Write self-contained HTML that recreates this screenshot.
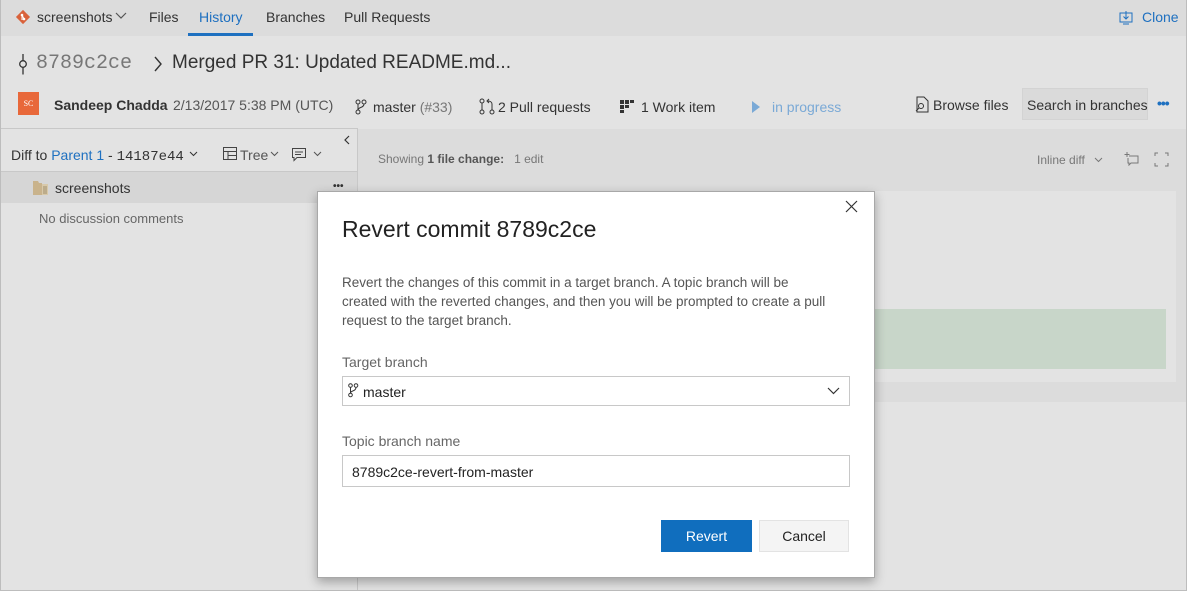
<!DOCTYPE html>
<html><head><meta charset="utf-8"><style>
*{box-sizing:border-box;margin:0;padding:0}
body{width:1187px;height:591px;overflow:hidden;background:#e3e3e3;font-family:"Liberation Sans",sans-serif;font-size:13px;color:#333;position:relative}
.a{position:absolute;white-space:nowrap}
</style></head><body>
<div class="a" style="left:0;top:0;width:1187px;height:591px;border:1px solid #bdbdbd;border-top:none"></div>
<div class="a" style="left:1px;top:0;width:1185px;height:36px;background:#dcdcdc"></div>
<svg class="a" style="left:15px;top:9px" width="16" height="16" viewBox="0 0 16 16"><rect x="3" y="3" width="10" height="10" transform="rotate(45 8 8)" fill="#d9623b"/><circle cx="7" cy="6" r="1.3" fill="#fff"/><circle cx="9" cy="10" r="1.3" fill="#fff"/><path d="M7 6L9 10M7 6v5" stroke="#fff" stroke-width="1"/></svg>
<div class="a" style="left:37px;top:9px;font-size:14px;color:#333">screenshots</div>
<svg class="a" style="left:115px;top:12px" width="12" height="8"><path d="M1 1l5 5 5-5" stroke="#555" fill="none" stroke-width="1.2"/></svg>
<div class="a" style="left:149px;top:9px;font-size:14px">Files</div>
<div class="a" style="left:199px;top:9px;font-size:14px;color:#1e70c0">History</div>
<div class="a" style="left:188px;top:33px;width:65px;height:3px;background:#1e70c0"></div>
<div class="a" style="left:266px;top:9px;font-size:14px">Branches</div>
<div class="a" style="left:344px;top:9px;font-size:14px">Pull Requests</div>
<svg class="a" style="left:1119px;top:10px" width="15" height="15"><rect x="1" y="3" width="12" height="9" fill="none" stroke="#1e70c0"/><path d="M7 1v8M4.5 6.5L7 9l2.5-2.5M4 14h6" stroke="#1e70c0" fill="none"/></svg>
<div class="a" style="left:1142px;top:9px;font-size:14px;color:#1e70c0">Clone</div>
<div class="a" style="left:1px;top:36px;width:1185px;height:92px;background:#e3e3e3"></div>
<svg class="a" style="left:18px;top:53px" width="10" height="22"><circle cx="5" cy="11" r="3.3" fill="none" stroke="#333" stroke-width="1.3"/><path d="M5 1v6.5M5 14.5v7" stroke="#333" stroke-width="1.3"/></svg>
<div class="a" style="left:36px;top:52px;font-family:'Liberation Mono',monospace;font-size:20px;color:#777">8789c2ce</div>
<svg class="a" style="left:153px;top:56px" width="10" height="16"><path d="M2 1l6 7-6 7" stroke="#333" fill="none" stroke-width="1.4"/></svg>
<div class="a" style="left:172px;top:52px;font-size:19px;color:#333">Merged PR 31: Updated README.md...</div>
<div class="a" style="left:18px;top:92px;width:21px;height:23px;background:#e8683a;color:#fff;font-size:8px;font-family:'Liberation Serif',serif;text-align:center;line-height:23px">SC</div>
<div class="a" style="left:54px;top:97px;font-size:14px;font-weight:bold;color:#333">Sandeep Chadda</div>
<div class="a" style="left:173px;top:97px;font-size:14px;color:#555">2/13/2017 5:38 PM (UTC)</div>
<svg class="a" style="left:355px;top:99px" width="12" height="16"><circle cx="3" cy="3" r="2" fill="none" stroke="#333"/><circle cx="9" cy="3" r="2" fill="none" stroke="#333"/><circle cx="3" cy="13" r="2" fill="none" stroke="#333"/><path d="M3 5v6M9 5c0 4-6 3-6 6" stroke="#333" fill="none"/></svg>
<div class="a" style="left:373px;top:99px;font-size:14px;color:#333">master <span style="color:#777">(#33)</span></div>
<svg class="a" style="left:479px;top:98px" width="16" height="17"><circle cx="3" cy="3" r="2" fill="none" stroke="#333"/><circle cx="3" cy="14" r="2" fill="none" stroke="#333"/><circle cx="13" cy="14" r="2" fill="none" stroke="#333"/><path d="M3 5v7M13 12V6c0-2-2-3-4-3M10 1L8 3l2 2" stroke="#333" fill="none"/></svg>
<div class="a" style="left:498px;top:99px;font-size:14px">2 Pull requests</div>
<svg class="a" style="left:620px;top:100px" width="16" height="13"><rect x="0" y="0" width="4" height="4" fill="#333"/><rect x="5" y="0" width="4" height="4" fill="#333"/><rect x="10" y="0" width="4" height="3" fill="#333"/><rect x="0" y="5" width="4" height="4" fill="#333"/><rect x="5" y="5" width="4" height="3" fill="#333"/><rect x="0" y="10" width="4" height="3" fill="#333"/></svg>
<div class="a" style="left:641px;top:99px;font-size:14px">1 Work item</div>
<svg class="a" style="left:751px;top:100px" width="10" height="14"><path d="M1 1l8 6-8 6z" fill="#7aa9d6"/></svg>
<div class="a" style="left:772px;top:99px;font-size:14px;color:#7aa9d6">in progress</div>
<svg class="a" style="left:914px;top:96px" width="16" height="17"><path d="M3 1h7l4 4v11H3z" fill="none" stroke="#333"/><circle cx="7" cy="10" r="2.5" fill="none" stroke="#333"/><path d="M5 12l-3 3" stroke="#333"/></svg>
<div class="a" style="left:933px;top:97px;font-size:14px">Browse files</div>
<div class="a" style="left:1022px;top:88px;width:126px;height:32px;background:#dadada;border:1px solid #d3d3d3"></div>
<div class="a" style="left:1027px;top:97px;font-size:14px">Search in branches</div>
<div class="a" style="left:1157px;top:95px;font-size:14px;color:#1e70c0;font-weight:bold;letter-spacing:-1px">•••</div>
<div class="a" style="left:1px;top:128px;width:357px;height:462px;background:#e3e3e3;border-right:1px solid #c8c8c8;border-top:1px solid #c8c8c8"></div>
<svg class="a" style="left:343px;top:135px" width="8" height="10"><path d="M6 1L2 5l4 4" stroke="#333" fill="none" stroke-width="1.2"/></svg>
<div class="a" style="left:11px;top:147px;font-size:14px">Diff to <span style="color:#1e70c0">Parent 1</span> - <span style="font-family:'Liberation Mono',monospace">14187e44</span></div>
<svg class="a" style="left:189px;top:151px" width="9" height="6"><path d="M1 1l3.5 3.5L8 1" stroke="#333" fill="none"/></svg>
<svg class="a" style="left:223px;top:147px" width="15" height="14"><rect x=".5" y=".5" width="13" height="12" fill="none" stroke="#444"/><path d="M.5 4.5h13M5 4.5v8M5 8.5h8.5" stroke="#444"/></svg>
<div class="a" style="left:240px;top:147px;font-size:14px;color:#555">Tree</div>
<svg class="a" style="left:270px;top:151px" width="9" height="6"><path d="M1 1l3.5 3.5L8 1" stroke="#555" fill="none"/></svg>
<svg class="a" style="left:292px;top:148px" width="15" height="14"><path d="M.5.5h13v9H5l-3 3v-3H.5z" fill="none" stroke="#444"/><path d="M3 4h8M3 6.5h6" stroke="#444"/></svg>
<svg class="a" style="left:313px;top:151px" width="9" height="6"><path d="M1 1l3.5 3.5L8 1" stroke="#555" fill="none"/></svg>
<div class="a" style="left:1px;top:171px;width:356px;height:1px;background:#c8c8c8"></div>
<div class="a" style="left:1px;top:172px;width:356px;height:31px;background:#d6d6d6"></div>
<svg class="a" style="left:33px;top:181px" width="16" height="14"><path d="M0 0h5l1 2h3v12H0z" fill="#c9b38c"/><path d="M9 3h6v11H9z" fill="#d8c9aa"/><path d="M10 6h4M10 8h4M10 10h4M10 12h4" stroke="#a08e6c"/></svg>
<div class="a" style="left:55px;top:180px;font-size:14px">screenshots</div>
<div class="a" style="left:333px;top:181px;font-size:10px;font-weight:bold;color:#333">•••</div>
<div class="a" style="left:39px;top:211px;font-size:13px;color:#666">No discussion comments</div>
<div class="a" style="left:358px;top:129px;width:828px;height:273px;background:#dcdcdc"></div>
<div class="a" style="left:378px;top:152px;font-size:12px;color:#777">Showing <span style="color:#555;font-weight:bold">1 file change:</span>&nbsp;&nbsp; 1 edit</div>
<div class="a" style="left:1037px;top:153px;font-size:12px;color:#777">Inline diff</div>
<svg class="a" style="left:1094px;top:157px" width="9" height="6"><path d="M1 1l3.5 3.5L8 1" stroke="#777" fill="none"/></svg>
<svg class="a" style="left:1123px;top:151px" width="16" height="15"><path d="M4 1v5M1.5 3.5h5M6 5h9v7H8l-2 2v-2H5V7" fill="none" stroke="#777"/></svg>
<svg class="a" style="left:1154px;top:152px" width="15" height="15"><path d="M1 4V1h3M11 1h3v3M14 11v3h-3M4 14H1v-3" fill="none" stroke="#777"/></svg>
<div class="a" style="left:363px;top:191px;width:813px;height:191px;background:#e3e3e3"></div>
<div class="a" style="left:870px;top:309px;width:296px;height:60px;background:#c8d6c9"></div>
<div class="a" style="left:317px;top:191px;width:558px;height:387px;background:#fff;border:1px solid #a8a8a8;box-shadow:0 4px 10px rgba(0,0,0,.3)"></div>
<svg class="a" style="left:845px;top:200px" width="13" height="13"><path d="M1 1l11 11M12 1L1 12" stroke="#333" stroke-width="1.2"/></svg>
<div class="a" style="left:342px;top:216px;font-size:23px;color:#222">Revert commit 8789c2ce</div>
<div class="a" style="left:342px;top:273px;font-size:13.5px;line-height:19px;color:#555">Revert the changes of this commit in a target branch. A topic branch will be<br>created with the reverted changes, and then you will be prompted to create a pull<br>request to the target branch.</div>
<div class="a" style="left:342px;top:354px;font-size:14px;color:#666">Target branch</div>
<div class="a" style="left:342px;top:376px;width:508px;height:30px;border:1px solid #c8c8c8"></div>
<svg class="a" style="left:348px;top:383px" width="11" height="15"><circle cx="2.5" cy="2.5" r="1.8" fill="none" stroke="#333"/><circle cx="8" cy="2.5" r="1.8" fill="none" stroke="#333"/><circle cx="2.5" cy="12" r="1.8" fill="none" stroke="#333"/><path d="M2.5 4.5v5.5M8 4.5c0 4-5.5 3-5.5 5.5" stroke="#333" fill="none"/></svg>
<div class="a" style="left:363px;top:384px;font-size:14px;color:#222">master</div>
<svg class="a" style="left:827px;top:387px" width="13" height="8"><path d="M1 1l5.5 5.5L12 1" stroke="#333" fill="none" stroke-width="1.2"/></svg>
<div class="a" style="left:342px;top:433px;font-size:14px;color:#666">Topic branch name</div>
<div class="a" style="left:342px;top:455px;width:508px;height:32px;border:1px solid #c8c8c8"></div>
<div class="a" style="left:352px;top:464px;font-size:14px;color:#222">8789c2ce-revert-from-master</div>
<div class="a" style="left:661px;top:520px;width:91px;height:32px;background:#106ebe;color:#fff;font-size:14px;text-align:center;line-height:32px">Revert</div>
<div class="a" style="left:759px;top:520px;width:90px;height:32px;background:#f4f4f4;border:1px solid #e3e3e3;color:#222;font-size:14px;text-align:center;line-height:30px">Cancel</div>
</body></html>
